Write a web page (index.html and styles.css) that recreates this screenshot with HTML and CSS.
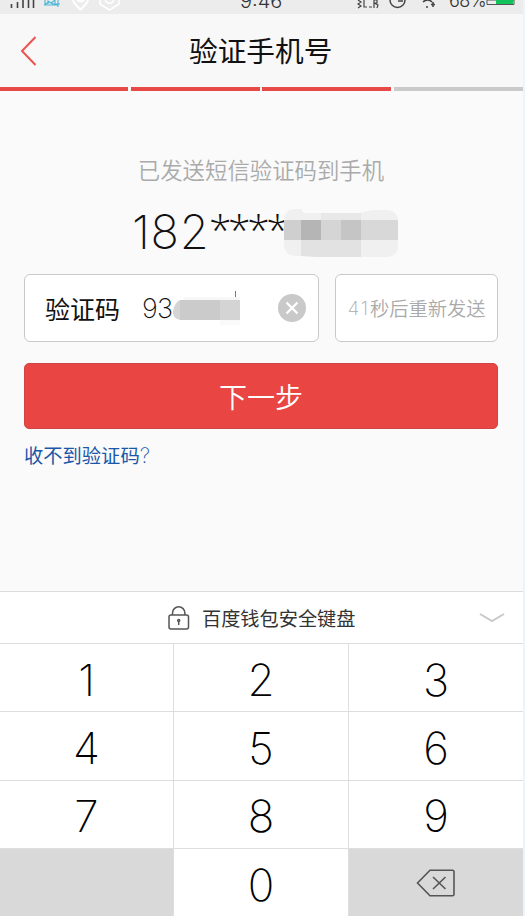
FILE: index.html
```html
<!DOCTYPE html>
<html lang="zh-CN">
<head>
<meta charset="utf-8">
<title>验证手机号</title>
<link rel="stylesheet" href="styles.css">
</head>
<body>
<div class="phone">
  <div class="status">
    <svg class="status-left" width="130" height="14" viewBox="0 0 130 14" fill="none">
      <path d="M11.500 4v4M17.500 2v6M23 0v8M28.500 0v8M33.500 0v8" stroke="#444" stroke-width="1.600"/>
      <path d="M45 0v5h13M48 4V1l3 2 4-3M55 0v5M58 0v7M44 5l5-3 4 2h7" stroke="#4bb5d8" stroke-width="1.100"/>
      <path d="M73 0c1 4 4 6 7.500 9.500C84 6 87 4 88 0M77 0q3.500 3 7 0" stroke="#fff" stroke-width="2"/>
      <path d="M100 0v4l9.500 6 9.500-6V0M105 0q4.500 7 9 0" stroke="#fff" stroke-width="1.500"/>
    </svg>
    <span class="time">9:46</span>
    <span class="percent">68%</span>
    <svg class="status-right" width="167" height="14" viewBox="0 0 167 14" fill="none">
      <path d="M1 0l3 2-3 2 3 2-3 2M7 0v7h3M12 7h3M17 8V0h3v3h-3l4 2-1 3" stroke="#444" stroke-width="1.200"/>
      <path d="M33 0a7.500 7.500 0 0 0 15 0M41 1h5" stroke="#444" stroke-width="1.500"/>
      <path d="M66 2q5-4 9 0M69 7h2M76 2v5M74 4.500h4" stroke="#444" stroke-width="1.600"/>
      <path d="M130 0h27v4.500h-27z" stroke="#555"/>
      <path d="M139 0h17v4h-17z" fill="#12c35b"/>
    </svg>
  </div>
  <header class="header">
    <svg class="back" width="17" height="30" viewBox="0 0 17 30" fill="none" stroke="#e95350" stroke-width="2"><path d="M15.500 1 2 15l13.500 14"/></svg>
    <h1>验证手机号</h1>
  </header>
  <div class="steps"><i class="done"></i><i class="done"></i><i class="done"></i><i></i></div>
  <main class="main">
    <p class="hint">已发送短信验证码到手机</p>
    <div class="number">
      <span class="digits">182</span><span class="stars">****</span>
      <svg class="mosaic" width="115" height="49" viewBox="0 0 115 49">
        <clipPath id="m"><path d="M0 12Q0 0 12 0h5l3 4h56q8-3 18-3h8q12 0 12 12v23q0 12-12 12H33l-16-1h-5Q0 47 0 34z"/></clipPath>
        <g clip-path="url(#m)">
          <path fill="#f0f0f0" d="M0 0h115v49H0z"/>
          <path fill="#e8e8e8" d="M37 0h40v11H37z"/>
          <path fill="#cfcfcf" d="M0 11h17v20H0z"/>
          <path fill="#b5b5b5" d="M17 11h20v20H17z"/>
          <path fill="#d5d5d5" d="M37 11h20v20H37z"/>
          <path fill="#c5c5c5" d="M57 11h20v20H57z"/>
          <path fill="#d8d8d8" d="M77 11h38v20H77z"/>
          <path fill="#e2e2e2" d="M17 31h60v18H17z"/>
        </g>
      </svg>
    </div>
    <div class="row">
      <div class="field">
        <label>验证码</label>
        <span class="code">93</span>
        <svg class="smudge" width="68" height="36" viewBox="0 0 68 36">
          <path fill="#f7f7f7" d="M12 7h56v3H12z"/>
          <path fill="#fafafa" d="M48 30h20v5H48z"/>
          <path fill="#d4d4d4" d="M8 10h60v20H8Q0 28 1 21 3 12 8 10z"/>
          <path fill="#cbcbcb" d="M8 10h40v20H8z"/>
          <path fill="#777" d="M63 1h1v6h-1z"/>
        </svg>
        <svg class="clear" width="28" height="28" viewBox="0 0 28 28"><circle cx="14" cy="14" r="14" fill="#c9c9c9"/><path d="m8.500 8.500 11 11m0-11-11 11" stroke="#fff" stroke-width="2.300"/></svg>
      </div>
      <div class="resend"><span class="thin">41</span>秒后重新发送</div>
    </div>
    <div class="next">下一步</div>
    <a class="help">收不到验证码<span class="thin">?</span></a>
  </main>
  <section class="keyboard">
    <div class="bar">
      <svg class="lock" width="22" height="24" viewBox="0 0 22 24" fill="none" stroke="#555" stroke-width="1.500"><rect x="1" y="9" width="19.500" height="14" rx="2"/><path d="M4.500 9V7a6.200 6.200 0 0 1 12.400 0v2"/><circle cx="10.700" cy="14.500" r="1"/><path d="M10.700 15v4"/></svg>
      <span>百度钱包安全键盘</span>
      <svg class="fold" width="26" height="10" viewBox="0 0 26 10" fill="none" stroke="#c9c9c9" stroke-width="2"><path d="m1 1 12 7 12-7"/></svg>
    </div>
    <div class="keys">
      <div>1</div><div>2</div><div>3</div>
      <div>4</div><div>5</div><div>6</div>
      <div>7</div><div>8</div><div>9</div>
      <div class="gray"></div><div>0</div>
      <div class="gray"><svg class="del" width="40" height="28" viewBox="0 0 40 28" fill="none" stroke="#555" stroke-width="1.600"><path d="M14 1.200h22.500q1.500 0 1.500 1.500v22.500q0 1.500-1.500 1.500H14L1.500 14z"/><path d="m17 8 12.500 12m0-12L17 20"/></svg></div>
    </div>
  </section>
</div>
</body>
</html>
```
FILE: styles.css
```css
* { box-sizing: border-box; }
body { margin: 0; background: #edf2fb; font-family: "Liberation Sans", "Noto Sans CJK SC", sans-serif; color: #111; }
svg { display: block; flex: none; }
.phone { width: 523px; height: 916px; background: #fafafa; display: flex; flex-direction: column; overflow: hidden; }
.status { position: relative; height: 14px; flex: none; background: #ececec; overflow: hidden; font-family: Inter, sans-serif; font-weight: 300; color: #333; }
.status-right { position: absolute; left: 357px; top: 0; }
.time { position: absolute; left: 240px; top: -11px; font-size: 20px; line-height: 24px; }
.percent { position: absolute; left: 449px; top: -10px; font-size: 18px; line-height: 22px; letter-spacing: -.5px; }
.header { height: 73px; flex: none; background: #f8f8f8; display: flex; align-items: center; padding-left: 20px; }
.header h1 { margin: 2px 0 0 152px; font-size: 28.700px; font-weight: 400; line-height: 40px; }
.steps { display: grid; grid-template-columns: 128px 129px 129px 129px; gap: 2.670px; height: 4px; flex: none; }
.steps i { background: #cacaca; }
.steps .done { background: #e64946; }
.main { height: 500px; flex: none; padding: 64px 25px 0 24px; }
.hint { margin: 0; text-align: center; font-size: 22.400px; line-height: 34px; color: #aaa; font-weight: 350; }
.number { display: flex; height: 66px; margin-top: 4px; padding-left: 108px; font-family: Inter, sans-serif; font-weight: 250; font-size: 47px; line-height: 78px; }
.digits { width: 77px; letter-spacing: .7px; }
.stars { width: 75px; font-family: "Open Sans", sans-serif; font-weight: 300; font-size: 41px; letter-spacing: -3.500px; line-height: 73px; }
.mosaic { margin: 16px 0 0 0; }
.row { display: flex; gap: 16px; margin-top: 15px; }
.field, .resend { height: 68px; border: 1px solid #c9c9c9; border-radius: 6px; background: #fff; display: flex; align-items: center; }
.field { width: 295px; padding-left: 20px; }
.field label { font-size: 25px; width: 97px; }
.code { font-family: Inter, sans-serif; font-weight: 250; font-size: 27px; letter-spacing: -.800px; width: 30px; padding-top: 1px; }
.clear { margin-left: 38px; }
.resend { flex: 1; justify-content: center; font-size: 19.300px; font-weight: 350; color: #aaa; white-space: nowrap; }
.thin { font-family: Inter, sans-serif; font-weight: 200; }
.resend .thin { letter-spacing: 1.800px; }
.next { height: 66px; margin-top: 21px; border: 1px solid #d04443; border-radius: 5px; background: #e94643; color: #fff; font-size: 28px; line-height: 69px; text-align: center; font-weight: 350; }
.help { display: block; margin-top: 12px; font-size: 19.300px; line-height: 30px; color: #1b57a8; }
.help .thin { font-size: 21px; }
.keyboard { flex: none; background: #fff; border-top: 1px solid #ddd; }
.bar { height: 51px; display: flex; align-items: center; padding-left: 168px; font-size: 19.200px; color: #333; }
.bar span { margin-left: 12px; width: 277px; }
.keys { display: grid; grid-template-columns: 173px 174px 174px; grid-auto-rows: 67.400px; gap: 1px; padding-top: 1px; background: #dedede; }
.keys div { background: #fff; display: flex; align-items: center; justify-content: center; font-family: Inter, sans-serif; font-weight: 250; font-size: 44px; padding-top: 4px; color: #000; }
.keys .gray { background: #d9d9d9; padding-top: 0; }
```
